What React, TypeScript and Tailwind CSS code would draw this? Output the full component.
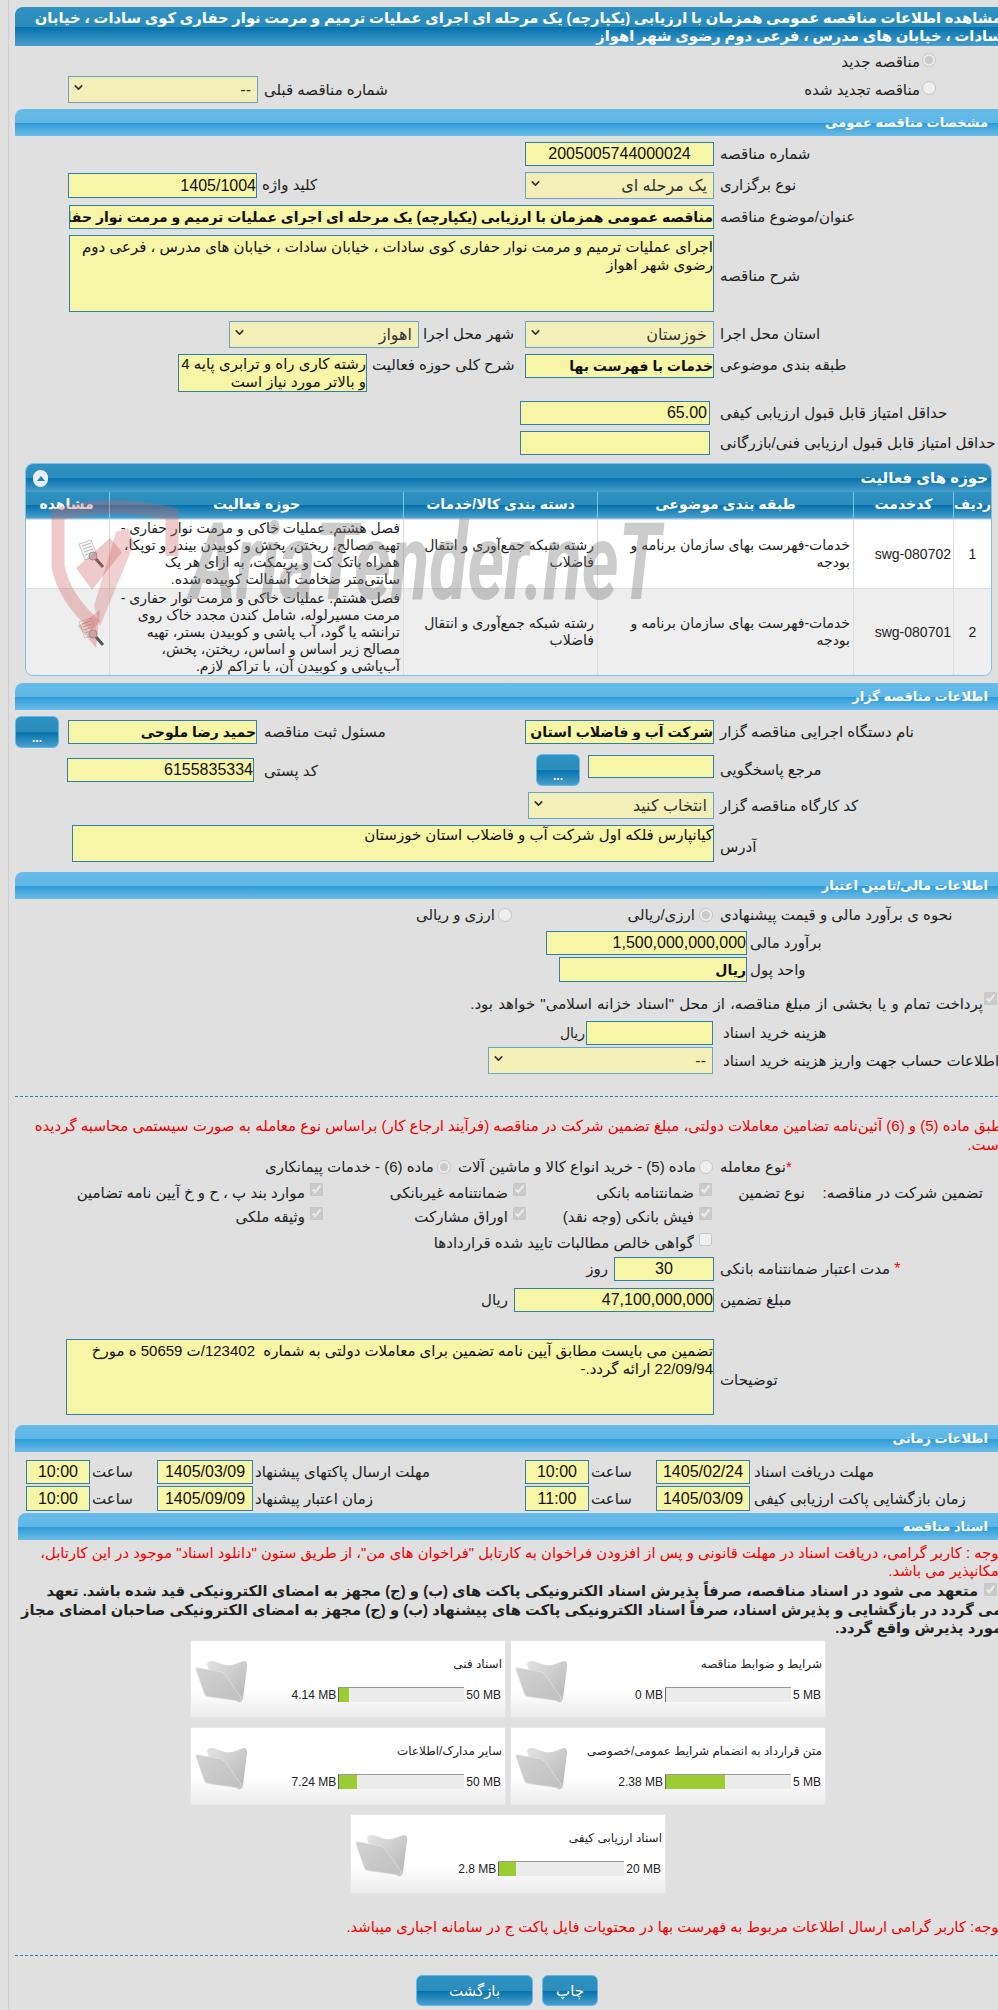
import React from 'react'
import { ChevronDown } from 'lucide-react'

const fieldCls = 'shrink-0 bg-[#f7f5a6] border border-[#2f7fad] text-[#111] outline-none'

const Field = ({ value, className = '' }: { value?: string; className?: string }) => (
  <input readOnly value={value ?? ''} dir="rtl" className={`${fieldCls} px-0 ${className}`} />
)

const Area = ({ value, className = '' }: { value: string; className?: string }) => (
  <textarea readOnly value={value} dir="rtl" className={`${fieldCls} resize-none overflow-hidden p-0 leading-[18px] ${className}`} />
)

const Select = ({ value, className = '' }: { value: string; className?: string }) => (
  <div className={`flex shrink-0 h-[27px] items-center justify-between bg-[#f2f0b8] border border-[#6ba4c4] pr-[6px] pl-[3px] text-[16px] text-[#333] ${className}`}>
    <span>{value}</span>
    <ChevronDown size={13} strokeWidth={3} className="text-[#333] -mt-[5px]" />
  </div>
)

const Label = ({ children, className = '' }: { children: React.ReactNode; className?: string }) => (
  <div className={`shrink-0 text-left whitespace-nowrap ${className}`}>{children}</div>
)

const Section = ({ title, className = 'mt-[6px]' }: { title: string; className?: string }) => (
  <div className={`flex h-[27px] items-center pr-[30px] rounded-tl-lg text-white font-bold text-[13px] bg-[linear-gradient(#66bbe9_0%,#60b7e7_50%,#2f9bd8_53%,#6abde8_100%)] ${className}`}>
    {title}
  </div>
)

const SmallButton = ({ className = '' }: { className?: string }) => (
  <button className={`flex shrink-0 h-[32px] w-[44px] items-end justify-center rounded-md border border-[#62b9e9] text-white font-bold text-[12px] leading-[14px] pb-[2px] bg-[linear-gradient(#2f92c2_0%,#2c8cbc_50%,#0672ac_52%,#4a9fcd_100%)] ${className}`}>
    ...
  </button>
)

const Radio = ({ checked = false }: { checked?: boolean }) => (
  <input type="radio" disabled checked={checked} readOnly className="m-0 shrink-0 w-[14px] h-[14px]" />
)

const Check = ({ checked = true, className = '' }: { checked?: boolean; className?: string }) => (
  <input type="checkbox" disabled checked={checked} readOnly className={`m-0 shrink-0 w-[13px] h-[13px] ${className}`} />
)

const CheckCell = ({ label, className = '', checked = true }: { label: string; className?: string; checked?: boolean }) => (
  <div className={`flex shrink-0 items-start whitespace-nowrap ${className}`}>
    <Check checked={checked} className="mr-[2px] mt-[-1px] ml-[5px]" />
    <span>{label}</span>
  </div>
)

const Folder = () => (
  <svg viewBox="0 0 53 44" className="w-[53px] h-[44px] shrink-0">
    <defs>
      <linearGradient id="fb" x1="0" y1="0" x2="1" y2="1">
        <stop offset="0" stopColor="#e4e4e4" />
        <stop offset="1" stopColor="#b4b4b4" />
      </linearGradient>
      <linearGradient id="ff" x1="0" y1="0" x2="1" y2="1">
        <stop offset="0" stopColor="#d2d2d2" />
        <stop offset="1" stopColor="#c0c0c0" />
      </linearGradient>
    </defs>
    <path d="M12 5Q14 1 18 2L30 6Q36 7 40 5L49 2Q53 2 52 8L48 39Q47 44 43 43L20 30Z" fill="url(#fb)" />
    <path d="M1 11Q0 8 4 9L26 13Q30 14 33 20L46 38Q47 43 43 42L15 38Q10 38 9 34Z" fill="url(#ff)" stroke="#e8e8e8" strokeWidth="0.6" />
  </svg>
)

const FileCard = ({ title, used, max, unit = 'MB', heightCls = 'h-[78px]' }: { title: string; used: number; max: number; unit?: string; heightCls?: string }) => (
  <div className={`flex w-[316px] ${heightCls} bg-[linear-gradient(#ffffff_0%,#ffffff_65%,#ececec_100%)] border border-[#e6e6e6] text-[12px] text-[#222]`}>
    <div className="flex-1">
      <div className="h-[46px] pt-[14px] pr-[3px] leading-[18px] whitespace-nowrap">{title}</div>
      <div className="flex h-[15px] items-center whitespace-nowrap" dir="rtl">
        <div className="shrink-0 pr-[4px] pl-[2px]" dir="ltr">{max} {unit}</div>
        <div className="flex h-[15px] w-[126px] shrink-0 justify-end bg-[#ececec] border-t border-[#999]" dir="rtl">
          <div className="h-full bg-[#9acd32] border-l border-[#666] mr-auto" style={{ width: `${Math.max((used / max) * 100, 1)}%` }} />
        </div>
        <div className="mr-[2px]" dir="ltr">{used} {unit}</div>
      </div>
    </div>
    <div className="pt-[18px] pl-[4px] order-last">
      <Folder />
    </div>
  </div>
)

const DocIcon = () => (
  <svg viewBox="0 0 30 30" className="w-[30px] h-[30px]">
    <path d="M3 5L15 1L21 16L9 21Z" fill="#f4f4f4" stroke="#bbb" strokeWidth="0.8" />
    <path d="M6 7L15 4M7 10L16 7M8 13L17 10M9 16L15 14" stroke="#aaa" strokeWidth="0.8" />
    <circle cx="17" cy="17" r="4" fill="#c9c9c9" stroke="#999" />
    <path d="M20 20L27 28" stroke="#555" strokeWidth="3" />
  </svg>
)

const rows = [
  {
    num: '1',
    code: 'swg-080702',
    cat: 'خدمات-فهرست بهای سازمان برنامه و بودجه',
    group: 'رشته شبکه جمع‌آوری و انتقال فاضلاب',
    lines: ['فصل هشتم. عملیات خاکی و مرمت نوار حفاری -', 'تهیه مصالح، ریختن، پخش و کوبیدن بیندر و توپکا،', 'همراه باتک کت و پریمکت، به ازای هر یک', 'سانتی‌متر ضخامت آسفالت کوبیده شده.'],
    bg: 'bg-white',
    h: 'h-[69px]',
  },
  {
    num: '2',
    code: 'swg-080701',
    cat: 'خدمات-فهرست بهای سازمان برنامه و بودجه',
    group: 'رشته شبکه جمع‌آوری و انتقال فاضلاب',
    lines: ['فصل هشتم. عملیات خاکی و مرمت نوار حفاری -', 'مرمت مسیرلوله، شامل کندن مجدد خاک روی', 'ترانشه یا گود، آب پاشی و کوبیدن بستر، تهیه', 'مصالح زیر اساس و اساس، ریختن، پخش،', 'آب‌پاشی و کوبیدن آن، با تراکم لازم.'],
    bg: 'bg-[#eeeeee]',
    h: 'h-[87px]',
  },
]

const headers = [
  { t: 'ردیف', w: 'w-[38px]' },
  { t: 'کدخدمت', w: 'w-[100px]' },
  { t: 'طبقه بندی موضوعی', w: 'w-[256px]' },
  { t: 'دسته بندی کالا/خدمات', w: 'w-[194px]' },
  { t: 'حوزه فعالیت', w: 'w-[294px]' },
  { t: 'مشاهده', w: 'w-[85px]' },
]

const titleGrad = 'bg-[linear-gradient(#2f92c2_0%,#2c8cbc_50%,#0672ac_52%,#4a9fcd_100%)]'

export default function App() {
  return (
    <div dir="rtl" className="relative w-[998px] h-[2010px] overflow-hidden bg-[#e0e0e0] text-[15px] leading-[18px] text-[#222] font-['Liberation_Sans','DejaVu_Sans',sans-serif]">
      <div className="ml-[8px] h-full border-l border-[#cccccc] bg-[#e0e0e0] pl-[6px]">
        <div className="w-[1003px] -mr-[20px] pt-[7px]">
          {/* title */}
          <div className={`h-[39px] pt-[2px] pr-[16px] rounded-tl-lg text-white text-[14.75px] [word-spacing:-0.4px] font-bold whitespace-nowrap ${titleGrad}`}>
            مشاهده اطلاعات مناقصه عمومی همزمان با ارزیابی (یکپارچه) یک مرحله ای اجرای عملیات ترمیم و مرمت نوار حفاری کوی سادات ، خیابان
            <br />
            سادات ، خیابان های مدرس ، فرعی دوم رضوی شهر اهواز
          </div>

          <div className="flex h-[20px] mt-[4px] pr-[82px] items-center">
            <Radio checked />
            <span className="mr-[2px] mt-[4px]">مناقصه جدید</span>
          </div>
          <div className="flex h-[27px] mt-[6px] pr-[82px] pl-[53px] justify-between">
            <div className="flex items-start pt-[5px]">
              <Radio />
              <span className="mr-[2px]">مناقصه تجدید شده</span>
            </div>
            <div className="flex items-start">
              <span className="mt-[5px] ml-[6px]">شماره مناقصه قبلی</span>
              <Select value="--" className="w-[190px]" />
            </div>
          </div>

          <Section title="مشخصات مناقصه عمومی" />

          <div className="flex mt-[6px] items-center">
            <Label className="w-[298px] ml-[6px]">شماره مناقصه</Label>
            <Field value="2005005744000024" className="w-[189px] h-[24px] text-center text-[16px]" />
          </div>
          <div className="flex h-[27px] mt-[6px] items-start">
            <Label className="w-[298px] ml-[6px] pt-[4px]">نوع برگزاری</Label>
            <Select value="یک مرحله ای" className="w-[189px]" />
            <Label className="w-[263px] ml-[5px] pt-[4px]">کلید واژه</Label>
            <Field value="1405/1004" className="w-[189px] h-[25px] mt-[1px] text-[16px]" />
          </div>
          <div className="flex mt-[6px] items-center">
            <Label className="w-[298px] ml-[6px]">عنوان/موضوع مناقصه</Label>
            <Field value="مناقصه عمومی همزمان با ارزیابی (یکپارچه) یک مرحله ای اجرای عملیات ترمیم و مرمت نوار حفاری کوی سادات" className="w-[645px] h-[24px] font-bold text-[14px]" />
          </div>
          <div className="flex mt-[6px] items-center">
            <Label className="w-[298px] ml-[6px] pt-[4px]">شرح مناقصه</Label>
            <Area value={'اجرای عملیات ترمیم و مرمت نوار حفاری کوی سادات ، خیابان سادات ، خیابان های مدرس ، فرعی دوم\nرضوی شهر اهواز'} className="w-[645px] h-[77px] pt-[2px] text-[15px]" />
          </div>
          <div className="flex h-[27px] mt-[9px] items-start">
            <Label className="w-[298px] ml-[6px] pt-[4px]">استان محل اجرا</Label>
            <Select value="خوزستان" className="w-[189px]" />
            <Label className="w-[102px] ml-[4px] pt-[4px]">شهر محل اجرا</Label>
            <Select value="اهواز" className="w-[190px]" />
          </div>
          <div className="flex mt-[6px] h-[38px] items-start">
            <Label className="w-[298px] ml-[6px] pt-[2px]">طبقه بندی موضوعی</Label>
            <Field value="خدمات با فهرست بها" className="w-[189px] h-[24px] font-bold text-[14px]" />
            <Label className="w-[153px] ml-[5px] pt-[2px]">شرح کلی حوزه فعالیت</Label>
            <Area value={'رشته کاری راه و ترابری پایه 4\nو بالاتر مورد نیاز است'} className="w-[189px] h-[38px] text-[15px]" />
          </div>
          <div className="flex mt-[9px] items-center">
            <Label className="w-[298px] ml-[10px]">حداقل امتیاز قابل قبول ارزیابی کیفی</Label>
            <Field value="65.00" className="w-[190px] h-[24px] text-[16px] pr-[2px]" />
          </div>
          <div className="flex mt-[6px] items-center">
            <Label className="w-[298px] ml-[10px]">حداقل امتیاز قابل قبول ارزیابی فنی/بازرگانی</Label>
            <Field className="w-[190px] h-[24px]" />
          </div>

          {/* activity panel */}
          <div className="ml-[10px] mr-[26px] mt-[8px] rounded-lg border border-[#7ec3ea] overflow-hidden">
            <div className={`flex h-[28px] items-center justify-between pr-[3px] pl-[7px] text-white font-bold text-[15px] ${titleGrad}`}>
              <span>حوزه های فعالیت</span>
              <span className="flex h-[17px] w-[15px] items-center justify-center rounded-full bg-[#e6eef4]">
                <span className="border-x-[4px] border-b-[5px] border-x-transparent border-b-[#2c80b0]" />
              </span>
            </div>
            <div className={`flex h-[27px] border-b border-[#7ec3ea] ${titleGrad}`}>
              {headers.map((h) => (
                <div key={h.t} className={`${h.w} shrink-0 border-l border-[#7ec3ea] text-center text-white font-bold text-[14px] leading-[25px] last:border-l-0`}>
                  {h.t}
                </div>
              ))}
            </div>
            {rows.map((r) => (
              <div key={r.num} className={`flex ${r.h} ${r.bg} text-[14px] leading-[17px] border-t border-[#dddddd]`}>
                <div className="w-[38px] shrink-0 flex items-center justify-center border-l border-[#dddddd]">{r.num}</div>
                <div className="w-[100px] shrink-0 flex items-center pr-[2px] border-l border-[#dddddd]">{r.code}</div>
                <div className="w-[256px] shrink-0 flex items-center pr-[3px] pl-[30px] border-l border-[#dddddd]">{r.cat}</div>
                <div className="w-[194px] shrink-0 flex items-center pr-[3px] pl-[10px] border-l border-[#dddddd]">{r.group}</div>
                <div className="w-[294px] shrink-0 flex flex-col justify-center pr-[3px] border-l border-[#dddddd] whitespace-nowrap">
                  {r.lines.map((l) => <div key={l}>{l}</div>)}
                </div>
                <div className="flex-1 flex items-center justify-center pl-[46px]"><DocIcon /></div>
              </div>
            ))}
          </div>

          <Section title="اطلاعات مناقصه گزار" className="mt-[7px]" />

          <div className="flex h-[32px] mt-[6px] items-center">
            <Label className="w-[298px] ml-[6px]">نام دستگاه اجرایی مناقصه گزار</Label>
            <Field value="شرکت آب و فاضلاب استان" className="w-[189px] h-[24px] font-bold text-[14px]" />
            <Label className="w-[261px] ml-[7px]">مسئول ثبت مناقصه</Label>
            <Field value="حمید رضا ملوحی" className="w-[189px] h-[24px] font-bold text-[14px]" />
            <SmallButton className="mr-[9px]" />
          </div>
          <div className="flex h-[32px] mt-[6px] items-center">
            <Label className="w-[298px] ml-[6px]">مرجع پاسخگویی</Label>
            <Field className="w-[126px] h-[23px] -mt-[8px]" />
            <SmallButton className="w-[43px] mr-[8px]" />
            <Label className="w-[272px] ml-[10px] pt-[2px]">کد پستی</Label>
            <Field value="6155835334" className="w-[187px] h-[24px] text-[16px]" />
          </div>
          <div className="flex h-[27px] mt-[6px] items-center">
            <Label className="w-[298px] ml-[6px]">کد کارگاه مناقصه گزار</Label>
            <Select value="انتخاب کنید" className="w-[186px]" />
          </div>
          <div className="flex mt-[6px] items-center">
            <Label className="w-[298px] ml-[6px] pt-[6px]">آدرس</Label>
            <Area value="کیانپارس فلکه اول شرکت آب و فاضلاب استان خوزستان" className="w-[642px] h-[37px] text-[15px]" />
          </div>

          <Section title="اطلاعات مالی/تامین اعتبار" className="mt-[10px]" />

          <div className="flex h-[20px] mt-[6px] items-center">
            <Label className="w-[298px] ml-[6px]">نحوه ی برآورد مالی و قیمت پیشنهادی</Label>
            <div className="flex w-[202px] shrink-0 items-center">
              <span className="mr-[1px] flex"><Radio checked /></span>
              <span className="mr-[4px]">ارزی/ریالی</span>
            </div>
            <div className="flex items-center">
              <Radio />
              <span className="mr-[3px]">ارزی و ریالی</span>
            </div>
          </div>
          <div className="flex mt-[6px] items-center">
            <Label className="w-[268px] ml-[3px]">برآورد مالی</Label>
            <Field value="1,500,000,000,000" className="w-[201px] h-[24px] text-[16px]" />
          </div>
          <div className="flex mt-[2px] items-center">
            <Label className="w-[268px] ml-[3px]">واحد پول</Label>
            <Field value="ریال" className="w-[188px] h-[25px] font-bold text-[14px]" />
          </div>
          <div className="flex h-[22px] mt-[9px] pr-[21px] items-start whitespace-nowrap">
            <Check className="mt-[1px] ml-[1px]" />
            <span className="mt-[4px] [word-spacing:1px]">پرداخت تمام و یا بخشی از مبلغ مناقصه، از محل &quot;اسناد خزانه اسلامی&quot; خواهد بود.</span>
          </div>
          <div className="flex mt-[8px] items-center">
            <Label className="w-[295px] ml-[10px]">هزینه خرید اسناد</Label>
            <Field className="w-[127px] h-[24px]" />
            <span className="mr-[1px] text-[14px]">ریال</span>
          </div>
          <div className="flex mt-[2px] items-center">
            <Label className="w-[295px] ml-[10px]">اطلاعات حساب جهت واریز هزینه خرید اسناد</Label>
            <Select value="--" className="w-[225px]" />
          </div>

          <div className="mt-[22px] mr-[20px] border-t border-dashed border-[#2a7fb0]" />

          <div className="mt-[19px] pr-[15px] h-[38px] text-[15px] leading-[19px] text-[#f00000] whitespace-nowrap">
            طبق ماده (5) و (6) آئین‌نامه تضامین معاملات دولتی، مبلغ تضمین شرکت در مناقصه (فرآیند ارجاع کار) براساس نوع معامله به صورت سیستمی محاسبه گردیده
            <br />
            است.
          </div>

          <div className="flex h-[20px] mt-[3px] items-center">
            <Label className="w-[298px] ml-[6px]"><span className="text-[#f00000]">*</span><span>نوع معامله</span></Label>
            <span className="mr-[1px] flex"><Radio /></span>
            <span className="mr-[3px]">ماده (5) - خرید انواع کالا و ماشین آلات</span>
            <span className="mr-[7px] flex"><Radio checked /></span>
            <span className="mr-[3px]">ماده (6) - خدمات پیمانکاری</span>
          </div>
          <div className="flex h-[20px] mt-[6px] items-center">
            <div className="w-[213px] shrink-0 pr-[35px] whitespace-nowrap">تضمین شرکت در مناقصه:</div>
            <div className="w-[91px] shrink-0 whitespace-nowrap">نوع تضمین</div>
            <CheckCell label="ضمانتنامه بانکی" className="w-[186px]" />
            <CheckCell label="ضمانتنامه غیربانکی" className="w-[203px]" />
            <CheckCell label="موارد بند پ ، ح و خ آیین نامه تضامین" />
          </div>
          <div className="flex h-[20px] mt-[4px] items-center pr-[304px]">
            <CheckCell label="فیش بانکی (وجه نقد)" className="w-[186px]" />
            <CheckCell label="اوراق مشارکت" className="w-[203px]" />
            <CheckCell label="وثیقه ملکی" />
          </div>
          <div className="flex h-[20px] mt-[6px] items-center pr-[304px]">
            <CheckCell label="گواهی خالص مطالبات تایید شده قراردادها" checked={false} />
          </div>
          <div className="flex mt-[4px] items-center">
            <Label className="w-[298px] ml-[6px]"><span className="text-[#f00000] text-[16px]">*</span> مدت اعتبار ضمانتنامه بانکی</Label>
            <Field value="30" className="w-[100px] h-[24px] text-center text-[16px]" />
            <span className="mr-[6px]">روز</span>
          </div>
          <div className="flex mt-[7px] items-center">
            <Label className="w-[298px] ml-[6px]">مبلغ تضمین</Label>
            <Field value="47,100,000,000" className="w-[200px] h-[24px] text-[16px]" />
            <span className="mr-[6px]">ریال</span>
          </div>
          <div className="flex mt-[27px] items-center">
            <Label className="w-[298px] ml-[6px] pt-[6px]">توضیحات</Label>
            <Area value={'تضمین می بایست مطابق آیین نامه تضمین برای معاملات دولتی به شماره  123402/ت 50659 ه مورخ\n22/09/94 ارائه گردد.-'} className="w-[648px] h-[76px] pt-[2px] text-[15px]" />
          </div>

          <Section title="اطلاعات زمانی" className="mt-[10px]" />

          <div className="flex mt-[8px] h-[24px] items-center">
            <Label className="w-[264px] ml-[4px]">مهلت دریافت اسناد</Label>
            <Field value="1405/02/24" className="w-[94px] h-[24px] text-center text-[16px]" />
            <Label className="w-[67px] pl-[2px]">ساعت</Label>
            <Field value="10:00" className="w-[64px] h-[24px] text-center text-[16px]" />
            <Label className="w-[270px] ml-[2px]">مهلت ارسال پاکتهای پیشنهاد</Label>
            <Field value="1405/03/09" className="w-[96px] h-[24px] text-center text-[16px]" />
            <Label className="w-[67px] pl-[2px]">ساعت</Label>
            <Field value="10:00" className="w-[64px] h-[24px] text-center text-[16px]" />
          </div>
          <div className="flex mt-[2px] h-[25px] items-center">
            <Label className="w-[264px] ml-[4px]">زمان بازگشایی پاکت ارزیابی کیفی</Label>
            <Field value="1405/03/09" className="w-[94px] h-[25px] text-center text-[16px]" />
            <Label className="w-[67px] pl-[2px]">ساعت</Label>
            <Field value="11:00" className="w-[64px] h-[25px] text-center text-[16px]" />
            <Label className="w-[270px] ml-[2px]">زمان اعتبار پیشنهاد</Label>
            <Field value="1405/09/09" className="w-[96px] h-[25px] text-center text-[16px]" />
            <Label className="w-[67px] pl-[2px]">ساعت</Label>
            <Field value="10:00" className="w-[64px] h-[25px] text-center text-[16px]" />
          </div>

          <Section title="اسناد مناقصه" className="mt-[2px] ml-[3px]" />

          <div className="mt-[4px] pr-[15px] h-[36px] text-[14.8px] text-[#f00000] whitespace-nowrap">
            توجه : کاربر گرامی، دریافت اسناد در مهلت قانونی و پس از افزودن فراخوان به کارتابل &quot;فراخوان های من&quot;، از طریق ستون &quot;دانلود اسناد&quot; موجود در این کارتابل،
            <br />
            امکانپذیر می باشد.
          </div>
          <div className="mt-[2px] pr-[21px] h-[55px] font-bold text-[14.7px] [word-spacing:0.2px] leading-[18.5px] whitespace-nowrap">
            <div className="flex items-start">
              <Check className="ml-[6px] mt-[1px]" />
              <span>متعهد می شود در اسناد مناقصه، صرفاً پذیرش اسناد الکترونیکی پاکت های (ب) و (ج) مجهز به امضای الکترونیکی قید شده باشد. تعهد</span>
            </div>
            <div className="-mr-[5px]">می گردد در بازگشایی و پذیرش اسناد، صرفاً اسناد الکترونیکی پاکت های پیشنهاد (ب) و (ج) مجهز به امضای الکترونیکی صاحبان امضای مجاز</div>
            <div className="-mr-[5px]">مورد پذیرش واقع گردد.</div>
          </div>

          <div className="flex mt-[3px] pr-[192px] gap-[4px]">
            <FileCard title="شرایط و ضوابط مناقصه" used={0} max={5} />
            <FileCard title="اسناد فنی" used={4.14} max={50} />
          </div>
          <div className="flex mt-[9px] pr-[192px] gap-[4px]">
            <FileCard title="متن قرارداد به انضمام شرایط عمومی/خصوصی" used={2.38} max={5} />
            <FileCard title="سایر مدارک/اطلاعات" used={7.24} max={50} />
          </div>
          <div className="flex mt-[9px] pr-[352px]">
            <FileCard title="اسناد ارزیابی کیفی" used={2.8} max={20} heightCls="h-[80px]" />
          </div>

          <div className="mt-[24px] pr-[15px] h-[19px] text-[14.8px] text-[#f00000] whitespace-nowrap">
            توجه: کاربر گرامی ارسال اطلاعات مربوط به فهرست بها در محتویات فایل پاکت ج در سامانه اجباری میباشد.
          </div>

          <div className="mt-[18px] mr-[20px] border-t border-dashed border-[#2a7fb0]" />

          <div className="flex mt-[19px] pr-[420px] gap-[9px]">
            <button className={`h-[31px] w-[56px] rounded-md border border-[#62b9e9] text-white text-[15px] ${titleGrad}`}>چاپ</button>
            <button className={`h-[31px] w-[117px] rounded-md border border-[#62b9e9] text-white text-[15px] ${titleGrad}`}>بازگشت</button>
          </div>
        </div>
      </div>

      {/* site watermark over the activity table */}
      <div className="absolute left-[50px] top-[498px] h-[160px] w-[620px] pointer-events-none" dir="ltr">
        <svg viewBox="0 0 130 155" className="absolute left-0 top-0 w-[130px] h-[155px]">
          <path d="M122 58V16Q64 2 8 16V68Q14 100 46 128" fill="none" stroke="rgba(205,100,100,0.35)" strokeWidth="13" />
          <path d="M28 128L50 112L46 150Z" fill="rgba(205,100,100,0.35)" />
          <path d="M26 70L60 40L72 54L42 92Z" fill="rgba(205,100,100,0.35)" />
          <path d="M66 34L78 30L84 46L50 128L44 108Z" fill="rgba(205,100,100,0.3)" />
        </svg>
        <div className="absolute left-[140px] top-[10px] origin-left scale-x-[0.65] italic font-bold text-[108px] leading-[108px] text-[rgba(120,120,120,0.38)] whitespace-nowrap font-['Roboto',sans-serif]">
          AriaTender.neT
        </div>
      </div>
    </div>
  )
}
